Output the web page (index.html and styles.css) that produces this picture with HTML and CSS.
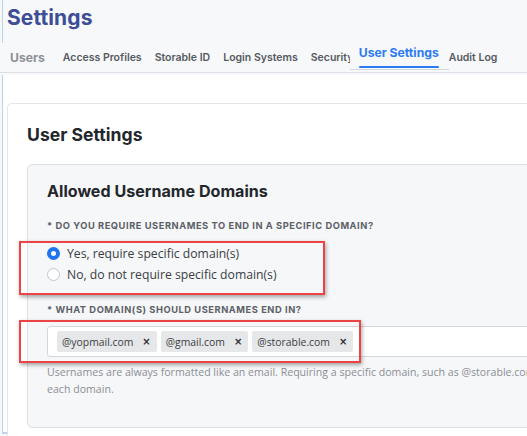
FILE: index.html
```html
<!DOCTYPE html>
<html>
<head>
<meta charset="utf-8">
<link rel="stylesheet" href="styles.css">
</head>
<body>
<div class="viewport">
  <header class="header">
    <h1 class="title">Settings</h1>
  </header>
  <nav class="tabs">
    <span class="tab tab-users">Users</span>
    <span class="tab">Access Profiles</span>
    <span class="tab">Storable ID</span>
    <span class="tab">Login Systems</span>
    <span class="tab tab-clip">Security</span>
    <span class="tab tab-active">User Settings</span>
    <span class="tab">Audit Log</span>
  </nav>
  <main class="content">
    <section class="card">
      <h2 class="card-title">User Settings</h2>
      <div class="panel">
        <h3 class="panel-title">Allowed Username Domains</h3>
        <div class="field-label">* Do you require usernames to end in a specific domain?</div>
        <div class="radios">
          <label class="radio"><span class="dot dot-on"></span>Yes, require specific domain(s)</label>
          <label class="radio"><span class="dot"></span>No, do not require specific domain(s)</label>
        </div>
        <div class="field-label field-label-2">* What domain(s) should usernames end in?</div>
        <div class="tag-input">
          <span class="chip">@yopmail.com<span class="x">×</span></span>
          <span class="chip">@gmail.com<span class="x">×</span></span>
          <span class="chip">@storable.com<span class="x">×</span></span>
        </div>
        <p class="help">Usernames are always formatted like an email. Requiring a specific domain, such as @storable.com, will require<br>each domain.</p>
      </div>
    </section>
  </main>
  <div class="mark mark-1"></div>
  <div class="mark mark-2"></div>
</div>
</body>
</html>
```
FILE: styles.css
```css
html, body {
  margin: 0;
  padding: 0;
}
body {
  background: #f7f8fa;
  width: 527px;
  height: 436px;
  overflow: hidden;
}
.viewport {
  position: relative;
  width: 527px;
  height: 436px;
  overflow: hidden;
}
.header {
  margin-left: 2px;
  border-left: 1px solid #b9d3ec;
  height: 43px;
  padding-left: 4px;
  box-sizing: border-box;
}
.title {
  margin: 0;
  padding-top: 5px;
  font-family: Inter, "Liberation Sans", sans-serif;
  font-weight: 700;
  font-size: 21px;
  line-height: 26px;
  color: #3e4d96;
  letter-spacing: 0.1px;
}
.tabs {
  display: flex;
  align-items: flex-end;
  height: 29px;
  border-bottom: 1px solid #dcdfe3;
  font-family: Inter, "Liberation Sans", sans-serif;
  font-weight: 600;
  font-size: 10.5px;
  color: #555a60;
}
.tab {
  padding: 0 0 8px 0;
  margin-right: 13px;
  white-space: nowrap;
}
.tab-users {
  margin-left: 10px;
  margin-right: 18px;
  font-size: 12.2px;
  color: #8c8f94;
  font-weight: 700;
  padding-bottom: 7px;
}
.tab-clip {
  width: 39px;
  overflow: hidden;
  margin-right: 0;
}
.tab-active {
  color: #2b7bf3;
  font-weight: 700;
  font-size: 12.2px;
  padding: 0 10px 9px 9px;
  margin-right: 0;
  position: relative;
  border-bottom: 1px solid #d4d8dd;
  margin-bottom: 2px;
}
.tab-active::after {
  content: "";
  position: absolute;
  left: 9px;
  right: 10px;
  bottom: 1px;
  height: 2px;
  background: #2b7bf3;
  border-radius: 1px;
}
.content {
  margin-top: 2px;
  margin-left: 2px;
  border-left: 1px solid #b9d3ec;
  border-bottom: 2px solid #b9d3ec;
  background: #ffffff;
  height: 359px;
  padding-top: 28px;
  padding-left: 4px;
  box-sizing: border-box;
}
.card {
  border: 1px solid #e4e6e9;
  border-right: none;
  border-radius: 5px 0 0 5px;
  background: #ffffff;
  padding: 0 0 0 19px;
  height: 340px;
}
.card-title {
  margin: 0;
  padding-top: 19px;
  font-family: Inter, "Liberation Sans", sans-serif;
  font-weight: 700;
  font-size: 17.6px;
  line-height: 24px;
  color: #23262b;
  height: 60px;
  box-sizing: border-box;
}
.panel {
  width: 700px;
  height: 264px;
  box-sizing: border-box;
  background: #f6f7f9;
  border: 1px solid #dcdfe3;
  border-radius: 5px;
  padding: 16px 0 0 19px;
}
.panel-title {
  margin: 0;
  font-family: Inter, "Liberation Sans", sans-serif;
  font-weight: 700;
  font-size: 16.1px;
  line-height: 20px;
  color: #23262b;
}
.field-label {
  margin-top: 19px;
  font-family: Inter, "Liberation Sans", sans-serif;
  font-weight: 700;
  font-size: 9.3px;
  line-height: 12px;
  letter-spacing: 0.55px;
  text-transform: uppercase;
  color: #5b5f66;
}
.radios {
  display: flex;
  flex-direction: column;
  gap: 4px;
  margin-top: 13px;
}
.radio {
  display: flex;
  align-items: center;
  gap: 7px;
  font-family: "Open Sans", "Noto Sans", sans-serif;
  font-size: 12.2px;
  line-height: 17px;
  color: #3a3d42;
}
.dot {
  width: 13px;
  height: 13px;
  border-radius: 50%;
  border: 1px solid #c4c7cb;
  background: #ffffff;
  box-sizing: border-box;
  flex: none;
}
.dot-on {
  border: 4px solid #1f74ef;
}
.field-label-2 {
  margin-top: 21px;
}
.tag-input {
  margin-top: 10px;
  display: flex;
  align-items: center;
  gap: 4px;
  height: 31px;
  box-sizing: border-box;
  background: #ffffff;
  border: 1px solid #d3d6da;
  border-radius: 3px;
  padding-left: 9px;
}
.chip {
  display: flex;
  align-items: center;
  height: 21px;
  padding: 0 6px 0 5px;
  background: #e6e7e9;
  border-radius: 2px;
  font-family: "Open Sans", "Noto Sans", sans-serif;
  font-size: 10.4px;
  color: #3a3d42;
}
.x {
  margin-left: 9px;
  font-family: "DejaVu Sans", sans-serif;
  font-weight: 700;
  font-size: 10px;
  color: #2a2c30;
}
.help {
  margin: 7px 0 0 0;
  font-family: "Open Sans", "Noto Sans", sans-serif;
  font-size: 10.6px;
  line-height: 17px;
  color: #8a8e94;
}
.mark {
  position: absolute;
  border: 2px solid #ec4444;
  box-shadow: 1px 2px 4px rgba(0, 0, 0, 0.35);
  box-sizing: border-box;
}
.mark-1 {
  left: 19px;
  top: 241px;
  width: 306px;
  height: 54px;
}
.mark-2 {
  left: 19px;
  top: 320px;
  width: 342px;
  height: 43px;
}
```
